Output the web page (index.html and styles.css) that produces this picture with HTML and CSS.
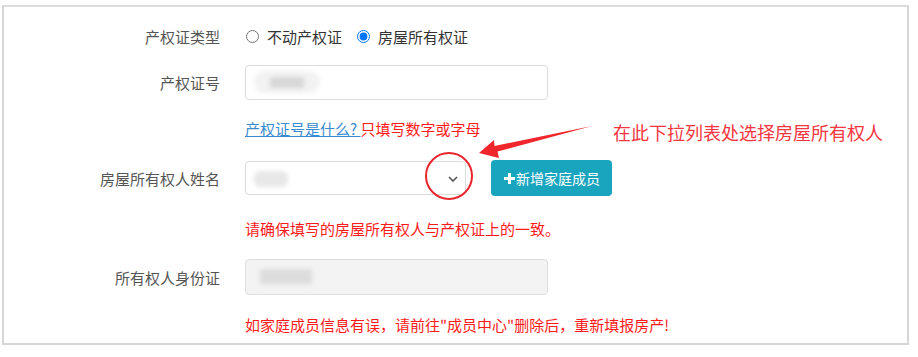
FILE: index.html
```html
<!DOCTYPE html>
<html>
<head>
    <title>房产信息填报</title>
    <meta name="viewport" content="width=device-width, initial-scale=1">
    <link rel="stylesheet" href="styles.css">
</head>
<body>
    <div class="form-box">
        <div class="form-row row-type">
            <label class="form-label">产权证类型</label>
            <div class="form-control radios">
                <label class="radio"><input type="radio" name="cert-type"> 不动产权证</label>
                <label class="radio"><input type="radio" name="cert-type" checked> 房屋所有权证</label>
            </div>
        </div>
        <div class="form-row row-cert">
            <label class="form-label">产权证号</label>
            <div class="form-control">
                <div class="input">
                    <span class="blur blur-a"><span class="blur-core"></span></span>
                </div>
            </div>
        </div>
        <div class="form-row row-help">
            <span class="form-label"></span>
            <div class="form-control">
                <a class="help-link" href="#">产权证号是什么? </a><span class="red">只填写数字或字母</span>
            </div>
        </div>
        <div class="form-row row-owner">
            <label class="form-label">房屋所有权人姓名</label>
            <div class="form-control owner-controls">
                <div class="select">
                    <span class="blur blur-b"></span>
                    <svg class="chevron" width="10" height="6" viewBox="0 0 10 6"><path d="M1 1 L5 5 L9 1" fill="none" stroke="#555" stroke-width="1.6"/></svg>
                </div>
                <button class="add-btn"><svg width="11" height="11" viewBox="0 0 11 11"><path d="M4 0h3v4h4v3h-4v4h-3v-4h-4v-3h4z" fill="#fff"/></svg>新增家庭成员</button>
            </div>
        </div>
        <div class="form-row row-note">
            <span class="form-label"></span>
            <div class="form-control red">请确保填写的房屋所有权人与产权证上的一致。</div>
        </div>
        <div class="form-row row-id">
            <label class="form-label">所有权人身份证</label>
            <div class="form-control">
                <div class="input disabled">
                    <span class="blur blur-c"></span>
                </div>
            </div>
        </div>
        <div class="form-row row-warn">
            <span class="form-label"></span>
            <div class="form-control red">如家庭成员信息有误，请前往"成员中心"删除后，重新填报房产!</div>
        </div>

        <!-- annotation drawn over the form -->
        <svg class="annot" width="918" height="357" viewBox="0 0 918 357">
            <ellipse cx="449" cy="176" rx="23" ry="23" fill="none" stroke="#e8262b" stroke-width="2"/>
            <path d="M479 153 L494 140 L494.5 146 L592 126 L497.5 151.5 L499 158 Z" fill="#f0262c"/>
        </svg>
        <div class="annot-text">在此下拉列表处选择房屋所有权人</div>
    </div>
</body>
</html>
```

FILE: styles.css
```css
body {
    margin: 0;
    font-family: "Noto Sans CJK SC", "Noto Sans", sans-serif;
    font-size: 15px;
    color: #555;
    background: #fff;
}
.form-box {
    position: relative;
    margin: 5px 0 0 2px;
    width: 907px;
    border: 2px solid #d6d6d6;
    border-top-color: #dcdcdc;
    padding: 11px 0 6px 0;
    height: 340px;
    box-sizing: border-box;
}
.form-row {
    display: flex;
    align-items: center;
}
.form-label {
    width: 216px;
    flex-shrink: 0;
    text-align: right;
    margin-right: 25px;
    color: #555;
}
.form-control {
    flex: 1;
}
.row-type {
    height: 36px;
}
.radios {
    display: flex;
    gap: 14px;
    color: #333;
}
.radio {
    display: flex;
    align-items: center;
}
.radio input {
    margin: 0 8px 0 1px;
    width: 13px;
    height: 13px;
}
.row-cert {
    margin-top: 11px;
}
.input {
    position: relative;
    width: 303px;
    height: 35px;
    border: 1px solid #dcdcdc;
    border-radius: 4px;
    box-sizing: border-box;
    background: #fff;
}
.input.disabled {
    height: 36px;
    background: #f3f3f3;
    border-color: #dedede;
}
.blur {
    position: absolute;
    display: block;
    filter: blur(2px);
}
.blur-a {
    left: 8px;
    top: 5px;
    width: 66px;
    height: 22px;
    border-radius: 11px;
    background: #f2f2f2;
}
.blur-core {
    position: absolute;
    left: 16px;
    top: 6px;
    width: 34px;
    height: 11px;
    background: #d8d8d8;
}
.blur-b {
    left: 8px;
    top: 9px;
    width: 34px;
    height: 16px;
    border-radius: 6px;
    background: #e8e8e8;
}
.blur-c {
    left: 14px;
    top: 9px;
    width: 52px;
    height: 15px;
    background: #dcdcdc;
}
.row-help {
    margin-top: 19px;
    line-height: 20px;
}
.help-link {
    color: #3b8bd0;
    text-decoration: underline;
    white-space: pre;
}
.red {
    color: #ff1a1a;
}
.row-owner {
    margin-top: 21px;
}
.owner-controls {
    display: flex;
    align-items: center;
    gap: 25px;
}
.select {
    position: relative;
    width: 221px;
    height: 34px;
    border: 1px solid #dcdcdc;
    border-radius: 4px;
    box-sizing: border-box;
}
.chevron {
    position: absolute;
    right: 7px;
    top: 14px;
}
.add-btn {
    display: flex;
    align-items: center;
    gap: 1px;
    height: 36px;
    width: 121px;
    padding: 0 0 0 13px;
    border: none;
    border-radius: 4px;
    background-color: #1aa5bf;
    color: #fff;
    font-family: "Noto Sans CJK SC", sans-serif;
    font-size: 14px;
    cursor: pointer;
}
.row-note {
    margin-top: 23px;
    line-height: 20px;
}
.row-id {
    margin-top: 20px;
}
.row-warn {
    margin-top: 20px;
    line-height: 20px;
}
.annot {
    position: absolute;
    left: -4px;
    top: -7px;
    pointer-events: none;
}
.annot-text {
    position: absolute;
    left: 609px;
    top: 113px;
    font-size: 18px;
    line-height: 24px;
    color: #f5353f;
    white-space: nowrap;
}
```
